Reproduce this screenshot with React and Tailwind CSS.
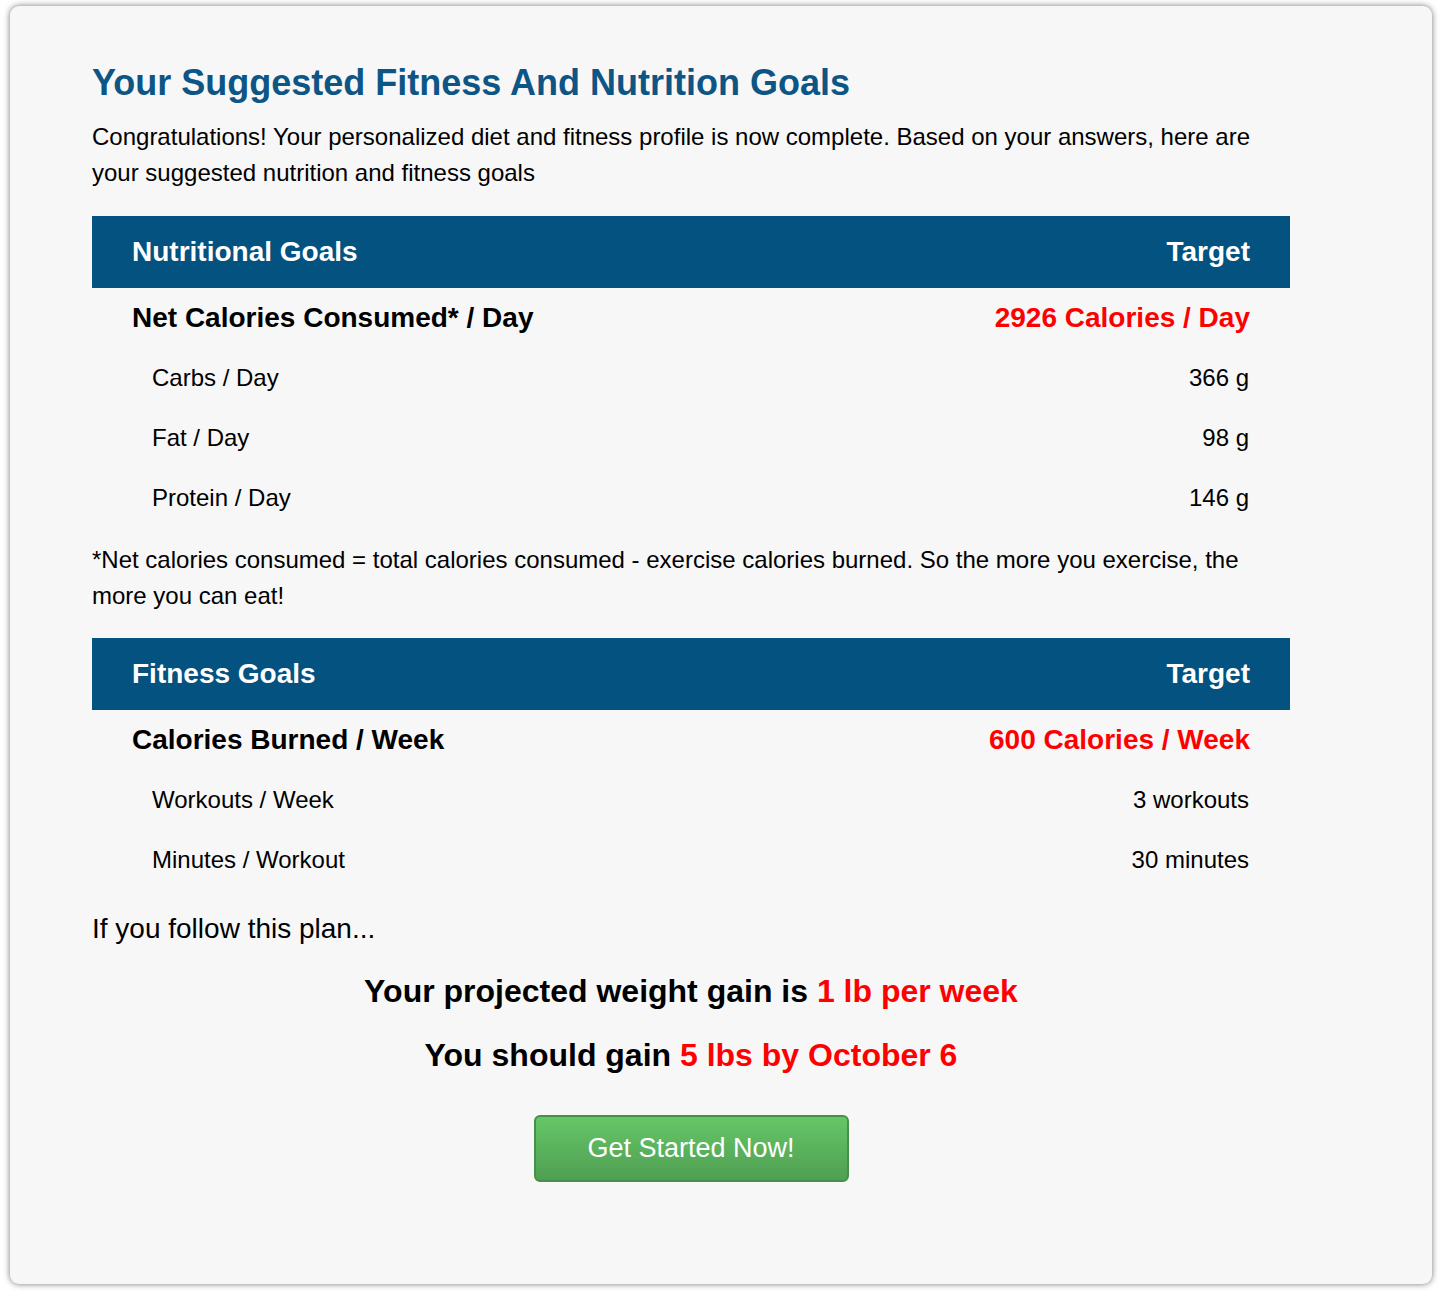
const nutrition = [
  { label: 'Carbs / Day', value: '366 g' },
  { label: 'Fat / Day', value: '98 g' },
  { label: 'Protein / Day', value: '146 g' },
];

const fitness = [
  { label: 'Workouts / Week', value: '3 workouts' },
  { label: 'Minutes / Workout', value: '30 minutes' },
];

function GoalTable({ title, mainLabel, mainValue, rows }) {
  return (
    <div className="w-[1198px]">
      <div className="flex h-[72px] items-center justify-between bg-[#04527f] px-[40px] text-[28px] font-bold text-white">
        <span>{title}</span>
        <span>Target</span>
      </div>
      <div className="flex h-[60px] items-center justify-between px-[40px] text-[28px] font-bold">
        <span className="text-black">{mainLabel}</span>
        <span className="text-[#ff0000]">{mainValue}</span>
      </div>
      {rows.map((r) => (
        <div key={r.label} className="flex h-[60px] items-center justify-between pl-[60px] pr-[41px] text-[24px] text-black">
          <span>{r.label}</span>
          <span>{r.value}</span>
        </div>
      ))}
    </div>
  );
}

export default function App() {
  return (
    <div className="min-h-[1292px] bg-white pt-[6px] pl-[10px] font-['Liberation_Sans',Arial,sans-serif]">
      <div className="h-[1278px] w-[1422px] rounded-[9px] bg-[#f7f7f7] pl-[82px] pt-[53px] shadow-[0_0_6px_rgba(0,0,0,0.55)]">
        <h1 className="text-[36px] font-bold leading-[48px] text-[#0d5585]">
          Your Suggested Fitness And Nutrition Goals
        </h1>
        <p className="mt-[12px] w-[1190px] text-[24px] leading-[36px] text-black">
          Congratulations! Your personalized diet and fitness profile is now complete. Based on your answers, here are
          your suggested nutrition and fitness goals
        </p>

        <div className="mt-[25px]">
          <GoalTable
            title="Nutritional Goals"
            mainLabel="Net Calories Consumed* / Day"
            mainValue="2926 Calories / Day"
            rows={nutrition}
          />
        </div>

        <p className="mt-[14px] w-[1190px] text-[24px] leading-[36px] text-black">
          *Net calories consumed = total calories consumed - exercise calories burned. So the more you exercise, the
          more you can eat!
        </p>

        <div className="mt-[24px]">
          <GoalTable
            title="Fitness Goals"
            mainLabel="Calories Burned / Week"
            mainValue="600 Calories / Week"
            rows={fitness}
          />
        </div>

        <p className="mt-[18px] text-[28px] leading-[42px] text-black">If you follow this plan...</p>

        <div className="w-[1198px] text-center text-[32px] font-bold text-black">
          <p className="mt-[21px] leading-[40px]">
            Your projected weight gain is <span className="text-[#ff0000]">1 lb per week</span>
          </p>
          <p className="mt-[24px] leading-[40px]">
            You should gain <span className="text-[#ff0000]">5 lbs by October 6</span>
          </p>
        </div>

        <div className="mt-[40px] flex w-[1198px] justify-center">
          <button className="h-[67px] w-[315px] rounded-[6px] border-2 border-[#46914a] bg-gradient-to-b from-[#66c667] to-[#4f9f52] text-[27px] text-white">
            Get Started Now!
          </button>
        </div>
      </div>
    </div>
  );
}
